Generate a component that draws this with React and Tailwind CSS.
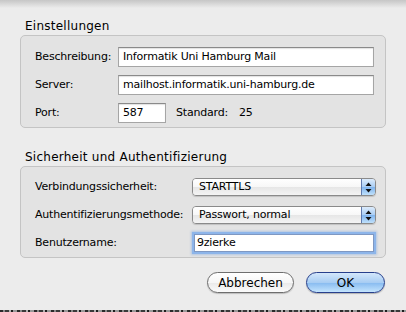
import React from 'react';

const Field = ({ value, className = '' }) => (
  <div
    className={`h-[20px] bg-white border border-[#a5a5a5] border-t-[#8a8a8a] shadow-[inset_0_1px_1px_rgba(0,0,0,0.12)] flex items-center pl-[4px] text-[11px] tracking-[-0.2px] ${className}`}
  >
    {value}
  </div>
);

const Stepper = () => (
  <svg width="7" height="11" viewBox="0 0 7 11">
    <path d="M3.5 0.5 L6.5 4 L0.5 4 Z" fill="#111" />
    <path d="M3.5 10.5 L6.5 7 L0.5 7 Z" fill="#111" />
  </svg>
);

const Select = ({ value }) => (
  <div className="w-[184px] h-[18px] flex rounded-[4px] border border-[#8a8a8a] shadow-[0_1px_1px_rgba(0,0,0,0.15)] overflow-hidden">
    <div className="flex-1 flex items-center pl-[6px] text-[11px] tracking-[-0.2px] bg-[linear-gradient(to_bottom,#ffffff_0%,#f7f7f7_50%,#e6e6e6_51%,#f4f4f4_100%)]">
      {value}
    </div>
    <div className="w-[14px] flex items-center justify-center border-l border-[#5f79ad] bg-[linear-gradient(to_bottom,#dcebfb_0%,#a9cdf4_50%,#7fb4ee_51%,#bfe0fb_100%)]">
      <Stepper />
    </div>
  </div>
);

const Row = ({ label, labelWidth, children, height }) => (
  <div className={`flex items-center ${height}`}>
    <div className={`${labelWidth} shrink-0 text-[11px] tracking-[-0.2px]`}>{label}</div>
    {children}
  </div>
);

export default function App() {
  return (
    <div className="w-[406px] h-[312px] bg-[#ececec] flex flex-col overflow-hidden text-black font-['DejaVu_Sans',sans-serif]">
      <div className="h-[8px] shrink-0 bg-gradient-to-b from-[#c6c6c6] to-[#ececec]" />

      <div className="pl-[20px] pt-[11px]">
        {/* Einstellungen */}
        <h2 className="pl-[5px] text-[12px] leading-[15px] tracking-[0.25px]">Einstellungen</h2>
        <div className="mt-[1px] w-[366px] h-[93px] rounded-[5px] border border-[#c4c4c4] bg-[#e3e3e3] pt-[11px] pl-[14px] pr-[11px] flex flex-col gap-[8px]">
          <Row label="Beschreibung:" labelWidth="w-[83px]" height="h-[20px]">
            <Field value="Informatik Uni Hamburg Mail" className="flex-1" />
          </Row>
          <Row label="Server:" labelWidth="w-[83px]" height="h-[20px]">
            <Field value="mailhost.informatik.uni-hamburg.de" className="flex-1" />
          </Row>
          <Row label="Port:" labelWidth="w-[83px]" height="h-[20px]">
            <Field value="587" className="w-[48px]" />
            <span className="ml-[10px] text-[11px] tracking-[-0.2px]">Standard:</span>
            <span className="ml-[11px] text-[11px] tracking-[-0.2px]">25</span>
          </Row>
        </div>

        {/* Sicherheit */}
        <h2 className="mt-[22px] pl-[5px] text-[12px] leading-[15px] tracking-[0.25px]">
          Sicherheit und Authentifizierung
        </h2>
        <div className="mt-[1px] w-[366px] h-[92px] rounded-[5px] border border-[#c4c4c4] bg-[#e3e3e3] pt-[9px] pl-[14px] flex flex-col gap-[6px]">
          <Row label="Verbindungssicherheit:" labelWidth="w-[157px]" height="h-[22px]">
            <Select value="STARTTLS" />
          </Row>
          <Row label="Authentifizierungsmethode:" labelWidth="w-[157px]" height="h-[22px]">
            <Select value="Passwort, normal" />
          </Row>
          <Row label="Benutzername:" labelWidth="w-[157px]" height="h-[22px]">
            <div className="ml-[2px] w-[180px] h-[18px] bg-white border border-[#7f98c2] shadow-[0_0_0_2px_#8db5ea,0_0_2px_3px_rgba(120,165,225,0.45)] flex items-center pl-[2px] text-[11px] tracking-[-0.2px]">
              9zierke
            </div>
          </Row>
        </div>
      </div>

      {/* Buttons */}
      <div className="mt-[14px] pr-[21px] flex justify-end gap-[12px]">
        <button className="w-[87px] h-[21px] rounded-full border border-[#6e6e6e] bg-[linear-gradient(to_bottom,#ffffff_0%,#f6f6f6_50%,#e9e9e9_51%,#fbfbfb_100%)] shadow-[0_1px_1px_rgba(0,0,0,0.2)] text-[12px] leading-none">
          Abbrechen
        </button>
        <button className="w-[79px] h-[21px] rounded-full border border-[#273f8c] bg-[linear-gradient(to_bottom,#d4e7fb_0%,#a8cdf3_50%,#86baf0_51%,#c4e4fd_100%)] shadow-[0_1px_1px_rgba(0,0,0,0.25)] text-[12px] leading-none">
          OK
        </button>
      </div>

      <div className="mt-auto h-[2px] shrink-0 bg-[repeating-linear-gradient(90deg,#2a2a2a_0_3px,#8a8a8a_3px_5px,#3a3a3a_5px_9px,#b0b0b0_9px_11px,#1e1e1e_11px_13px,#999_13px_17px)]" />
    </div>
  );
}
